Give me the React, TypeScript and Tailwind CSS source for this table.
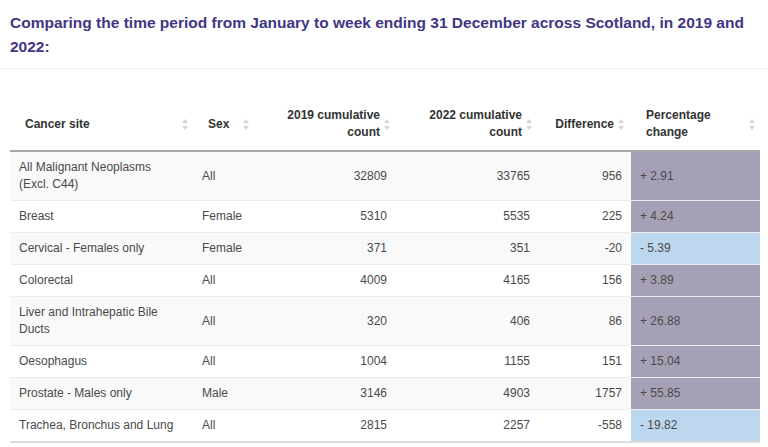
const rows = [
  { site: 'All Malignant Neoplasms (Excl. C44)', sex: 'All', c2019: 32809, c2022: 33765, diff: 956, pct: '+ 2.91' },
  { site: 'Breast', sex: 'Female', c2019: 5310, c2022: 5535, diff: 225, pct: '+ 4.24' },
  { site: 'Cervical - Females only', sex: 'Female', c2019: 371, c2022: 351, diff: -20, pct: '- 5.39' },
  { site: 'Colorectal', sex: 'All', c2019: 4009, c2022: 4165, diff: 156, pct: '+ 3.89' },
  { site: 'Liver and Intrahepatic Bile Ducts', sex: 'All', c2019: 320, c2022: 406, diff: 86, pct: '+ 26.88' },
  { site: 'Oesophagus', sex: 'All', c2019: 1004, c2022: 1155, diff: 151, pct: '+ 15.04' },
  { site: 'Prostate - Males only', sex: 'Male', c2019: 3146, c2022: 4903, diff: 1757, pct: '+ 55.85' },
  { site: 'Trachea, Bronchus and Lung', sex: 'All', c2019: 2815, c2022: 2257, diff: -558, pct: '- 19.82' },
];

const SortIcon = () => (
  <svg width="6" height="11" viewBox="0 0 6 11" className="shrink-0">
    <polygon points="3,0 6,4 0,4" fill="#d4d4d4" />
    <polygon points="0,7 6,7 3,11" fill="#d4d4d4" />
  </svg>
);

const App = () => {
  return (
    <div className="w-[768px] h-[447px] bg-white overflow-hidden font-['Liberation_Sans',Arial,sans-serif]">
      {/* Heading */}
      <div className="px-[10px] pt-[11px] pb-[9px] border-b border-[#f1f1f1]">
        <h3 className="text-[15.5px] leading-[24px] font-bold text-[#3f3685]">
          Comparing the time period from January to week ending 31 December across Scotland, in 2019 and 2022:
        </h3>
      </div>

      {/* Table */}
      <div className="px-[10px] mt-[29px]">
        <table className="w-[750px] table-fixed border-collapse text-[12px] leading-[17px]">
          <colgroup>
            <col className="w-[183px]" />
            <col className="w-[62px]" />
            <col className="w-[141px]" />
            <col className="w-[143px]" />
            <col className="w-[92px]" />
            <col className="w-[129px]" />
          </colgroup>
          <thead>
            <tr className="border-b-2 border-[#a8a8a8] text-[#333] font-bold">
              <th className="py-[9px] pl-[15px] pr-[5px] text-left">
                <div className="flex items-center justify-between">
                  <span>Cancer site</span>
                  <SortIcon />
                </div>
              </th>
              <th className="py-[9px] pl-[15px] pr-[6px] text-left">
                <div className="flex items-center justify-between">
                  <span>Sex</span>
                  <SortIcon />
                </div>
              </th>
              <th className="py-[9px] pl-[15px] pr-[6px] text-right">
                <div className="flex items-center justify-end gap-[4px]">
                  <span>2019 cumulative<br />count</span>
                  <SortIcon />
                </div>
              </th>
              <th className="py-[9px] pl-[15px] pr-[7px] text-right">
                <div className="flex items-center justify-end gap-[4px]">
                  <span>2022 cumulative<br />count</span>
                  <SortIcon />
                </div>
              </th>
              <th className="py-[9px] pl-[10px] pr-[7px] text-right">
                <div className="flex items-center justify-end gap-[4px]">
                  <span>Difference</span>
                  <SortIcon />
                </div>
              </th>
              <th className="py-[9px] pl-[15px] pr-[5px] text-left">
                <div className="flex items-center justify-between">
                  <span>Percentage<br />change</span>
                  <SortIcon />
                </div>
              </th>
            </tr>
          </thead>
          <tbody className="text-[#4a4a4a]">
            {rows.map((r, i) => {
              const last = i === rows.length - 1;
              return (
                <tr
                  key={r.site}
                  className={`${i % 2 === 0 ? 'bg-[#f9f9f9]' : 'bg-white'} ${last ? 'border-b-2 border-[#dcdcdc]' : 'border-b border-[#ececec]'}`}
                >
                  <td className="py-[7px] pl-[9px] pr-[12px] align-middle">{r.site}</td>
                  <td className="py-[7px] px-[9px] align-middle">{r.sex}</td>
                  <td className="py-[7px] px-[9px] text-right align-middle">{r.c2019}</td>
                  <td className="py-[7px] px-[9px] text-right align-middle">{r.c2022}</td>
                  <td className="py-[7px] px-[9px] text-right align-middle">{r.diff}</td>
                  <td
                    className={`py-[7px] px-[9px] align-middle ${r.diff < 0 ? 'bg-[#bdd7ee]' : 'bg-[#a6a0b6]'}`}
                  >
                    {r.pct}
                  </td>
                </tr>
              );
            })}
          </tbody>
        </table>
      </div>
    </div>
  );
};

export default App;
